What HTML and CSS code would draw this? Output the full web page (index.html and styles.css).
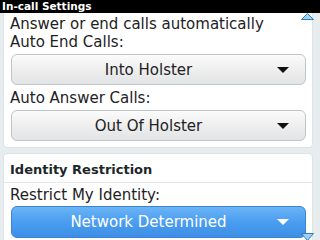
FILE: index.html
```html
<html>
    <head>
<link rel="stylesheet" href="styles.css">
    </head>
    <body>
        <div class="titlebar">In-call Settings</div>
        <div class="screen">
            <div class="card first">
                <div class="label">Answer or end calls automatically</div>
                <div class="label">Auto End Calls:</div>
                <div class="choice">
                    <span class="value">Into Holster</span>
                    <svg class="arrow" width="12" height="6" viewBox="0 0 12 6"><polygon points="0,0 12,0 6,6"/></svg>
                </div>
                <div class="label gap">Auto Answer Calls:</div>
                <div class="choice">
                    <span class="value">Out Of Holster</span>
                    <svg class="arrow" width="12" height="6" viewBox="0 0 12 6"><polygon points="0,0 12,0 6,6"/></svg>
                </div>
            </div>
            <div class="card">
                <div class="heading">Identity Restriction</div>
                <div class="label gap">Restrict My Identity:</div>
                <div class="choice focus">
                    <span class="value">Network Determined</span>
                    <svg class="arrow" width="12" height="6" viewBox="0 0 12 6"><polygon points="0,0 12,0 6,6"/></svg>
                </div>
            </div>
            <!-- scroll hints -->
            <svg class="scroll up" width="13" height="7" viewBox="0 0 13 7"><polygon points="0.5,6.5 12.5,6.5 6.5,0.5"/></svg>
            <svg class="scroll down" width="13" height="8" viewBox="0 0 13 8"><polygon points="0.5,0.5 12.5,0.5 6.5,7.5"/></svg>
        </div>
    </body>
</html>
```

FILE: styles.css
```css
/* Base page */
body {
    margin: 0;
    width: 320px;
    height: 240px;
    overflow: hidden;
    background: #e7edef;
    font-family: "DejaVu Sans", sans-serif;
    color: #1e2224;
}
/* Black title strip */
.titlebar {
    height: 13px;
    padding-left: 2px;
    background: #000;
    color: #fff;
    font-family: "DejaVu Sans", sans-serif;
    font-weight: bold;
    font-size: 10.5px;
    line-height: 12px;
}
/* Scrolled content area */
.screen {
    position: relative;
    height: 227px;
    overflow: hidden;
}
.card {
    margin: 0 7px 0 3px;
    padding: 8px 6px 6px 6px;
    background: #fff;
    border: 1px solid #dde4e7;
    border-radius: 4px;
    box-sizing: border-box;
}
/* First card is scrolled up - its top edge sits above the screen */
.card.first {
    margin-top: -4px;
    padding-top: 5px;
    margin-bottom: 5px;
}
.label {
    font-size: 15px;
    line-height: 18px;
}
.label.gap {
    margin-top: 4px;
}
.heading {
    margin: 0 -6px;
    padding: 0 6px 4px 6px;
    border-bottom: 1px solid #e3e8ea;
    font-weight: bold;
    font-size: 13px;
    line-height: 16px;
    color: #202628;
}
.heading + .label.gap {
    margin-top: 3px;
}
/* Drop down buttons */
.choice {
    display: flex;
    align-items: center;
    height: 31px;
    margin: 3px 0 0 1px;
    border: 1px solid #bfc5c8;
    border-radius: 6px;
    background: linear-gradient(#fbfbfb, #ececec 60%, #e2e4e5);
    box-sizing: border-box;
    font-size: 15px;
}
.choice .value {
    flex: 1;
    padding-left: 8px;
    text-align: center;
}
.choice .arrow {
    margin-right: 16px;
    fill: #111;
}
.choice.focus {
    margin-top: 2px;
    height: 32px;
    border-color: #3a84d6;
    background: linear-gradient(#6cb4f6, #4a9df0 50%, #3d8fe6);
    color: #fff;
}
.choice.focus .arrow {
    fill: #fff;
}
/* Scroll indicators - drawn over the content */
.scroll {
    position: absolute;
    right: 6px;
    fill: #9fd2f2;
    stroke: #2f7fbf;
    stroke-width: 1;
}
.scroll.up {
    top: 0;
}
.scroll.down {
    bottom: -1px;
}
```
